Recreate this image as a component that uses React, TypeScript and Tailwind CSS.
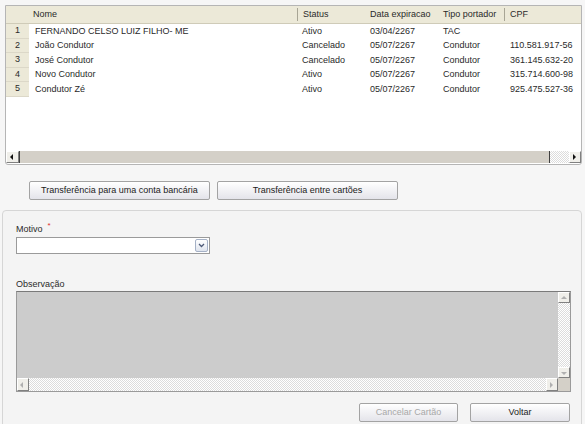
import React from 'react';

type Row = { n: number; nome: string; status: string; data: string; tipo: string; cpf: string };

const rows: Row[] = [
  { n: 1, nome: 'FERNANDO CELSO LUIZ FILHO- ME', status: 'Ativo', data: '03/04/2267', tipo: 'TAC', cpf: '' },
  { n: 2, nome: 'João Condutor', status: 'Cancelado', data: '05/07/2267', tipo: 'Condutor', cpf: '110.581.917-56' },
  { n: 3, nome: 'José Condutor', status: 'Cancelado', data: '05/07/2267', tipo: 'Condutor', cpf: '361.145.632-20' },
  { n: 4, nome: 'Novo Condutor', status: 'Ativo', data: '05/07/2267', tipo: 'Condutor', cpf: '315.714.600-98' },
  { n: 5, nome: 'Condutor Zé', status: 'Ativo', data: '05/07/2267', tipo: 'Condutor', cpf: '925.475.527-36' },
];

const cols = 'grid grid-cols-[23px_268px_68px_73px_66px_1fr]';
const checker = 'bg-[repeating-conic-gradient(#dcdcdc_0%_25%,#ffffff_0%_50%)] bg-[length:2px_2px]';

function Arrow({ dir, muted }: { dir: 'left' | 'right' | 'up' | 'down'; muted?: boolean }) {
  const pts = {
    left: '5,2 5,8 2,5',
    right: '3,2 3,8 6,5',
    up: '2,6 8,6 5,3',
    down: '2,4 8,4 5,7',
  }[dir];
  return (
    <svg width="10" height="10" viewBox="0 0 10 10">
      <polygon points={pts} fill={muted ? '#b0b0b0' : '#111'} />
    </svg>
  );
}

function ScrollBtn({ dir, muted, className = '' }: { dir: 'left' | 'right' | 'up' | 'down'; muted?: boolean; className?: string }) {
  return (
    <div
      className={`flex items-center justify-center bg-[#f0efea] border-t border-l border-t-white border-l-white border-b border-r border-b-[#808080] border-r-[#808080] ${className}`}
    >
      <Arrow dir={dir} muted={muted} />
    </div>
  );
}

function Button({ label, disabled, className = '' }: { label: string; disabled?: boolean; className?: string }) {
  return (
    <button
      className={`h-[19px] rounded-[2px] border border-[#a3a3a3] bg-[linear-gradient(#ffffff,#e4e4ea)] text-[9px] ${
        disabled ? 'text-[#a8a8a8]' : 'text-[#1a1a1a]'
      } ${className}`}
    >
      {label}
    </button>
  );
}

export default function App() {
  return (
    <div className="w-[585px] h-[424px] overflow-hidden bg-[#f6f6f6] pt-[5px] font-['Liberation_Sans',Arial,sans-serif] text-[9px] text-[#2a2a2a]">
      {/* Grid panel */}
      <div className="ml-[5px] flex h-[160px] w-[577px] flex-col rounded-b-[3px] border border-[#b5b5b5] bg-white">
        {/* Header */}
        <div className={`${cols} h-[18px] items-center border-b border-[#cfcbb8] bg-[#ece9d8]`}>
          <div />
          <div className="pl-[4px]">Nome</div>
          <div className="border-l border-[#a8a595] pl-[5px]">Status</div>
          <div className="pl-[5px]">Data expiracao</div>
          <div className="pl-[5px]">Tipo portador</div>
          <div className="border-l border-[#a8a595] pl-[5px]">CPF</div>
        </div>

        {/* Rows */}
        {rows.map((r) => (
          <div key={r.n} className={`${cols} h-[14.5px] items-center`}>
            <div className="flex h-full items-center justify-center border-b border-[#dcd8c8] bg-[#ece9d8]">{r.n}</div>
            <div className="pl-[6px] whitespace-nowrap">{r.nome}</div>
            <div className="pl-[5px]">{r.status}</div>
            <div className="pl-[5px]">{r.data}</div>
            <div className="pl-[5px]">{r.tipo}</div>
            <div className="pl-[6px]">{r.cpf}</div>
          </div>
        ))}

        <div className="flex-1" />

        {/* Horizontal scrollbar */}
        <div className="mb-[1px] flex h-[12px] items-stretch">
          <ScrollBtn dir="left" className="w-[13px]" />
          <div className="w-[531px] border-l border-r border-[#404040] bg-[#d4d0c8]" />
          <div className={`flex-1 ${checker}`} />
          <ScrollBtn dir="right" className="w-[12px]" />
        </div>
      </div>

      {/* Action buttons */}
      <div className="mt-[16px] flex gap-[7px] pl-[29px]">
        <Button label="Transferência para uma conta bancária" className="w-[181px]" />
        <Button label="Transferência entre cartões" className="w-[181px]" />
      </div>

      {/* Form panel */}
      <div className="ml-[2px] mt-[10px] h-[230px] w-[580px] rounded-[4px] border border-[#d6d6d6] bg-[#f4f4f4] pl-[13px]">
        <div className="mt-[12px] flex h-[12px] items-center leading-[12px]">
          <span>Motivo</span>
          <span className="ml-[5px] -mt-[6px] text-[8px] text-[#e03030]">*</span>
        </div>
        <div className="mt-[2px] flex h-[17px] w-[194px] items-center justify-end border border-[#9a9a9a] bg-white pr-[1px]">
          <div className="flex h-[13px] w-[13px] items-center justify-center rounded-[2px] border border-[#a5b1c6] bg-[linear-gradient(#ffffff,#dfe4ee)]">
            <svg width="9" height="9" viewBox="0 0 9 9">
              <polyline points="2,3 4.5,5.5 7,3" fill="none" stroke="#4d5a78" strokeWidth="1.3" />
            </svg>
          </div>
        </div>

        <div className="mt-[24px] h-[12px] leading-[12px]">Observação</div>
        <div className="mt-[1px] flex h-[101px] w-[555px] flex-col border border-[#9a9a9a] border-t-[#7a7a7a]">
          <div className="flex flex-1">
            <div className="flex-1 bg-[#cccccc]" />
            <div className={`flex w-[12px] flex-col ${checker}`}>
              <ScrollBtn dir="up" muted className="h-[11px]" />
              <div className="flex-1" />
              <ScrollBtn dir="down" muted className="h-[11px]" />
            </div>
          </div>
          <div className="flex h-[13px]">
            <div className={`flex flex-1 ${checker}`}>
              <ScrollBtn dir="left" muted className="w-[12px]" />
              <div className="flex-1" />
              <ScrollBtn dir="right" muted className="w-[12px]" />
            </div>
            <div className="w-[12px] bg-[#d4d0c8]" />
          </div>
        </div>

        <div className="mt-[11px] flex justify-end gap-[12px] pr-[11px]">
          <Button label="Cancelar Cartão" disabled className="w-[99px] h-[18px]" />
          <Button label="Voltar" className="w-[100px] h-[18px]" />
        </div>
      </div>
    </div>
  );
}
